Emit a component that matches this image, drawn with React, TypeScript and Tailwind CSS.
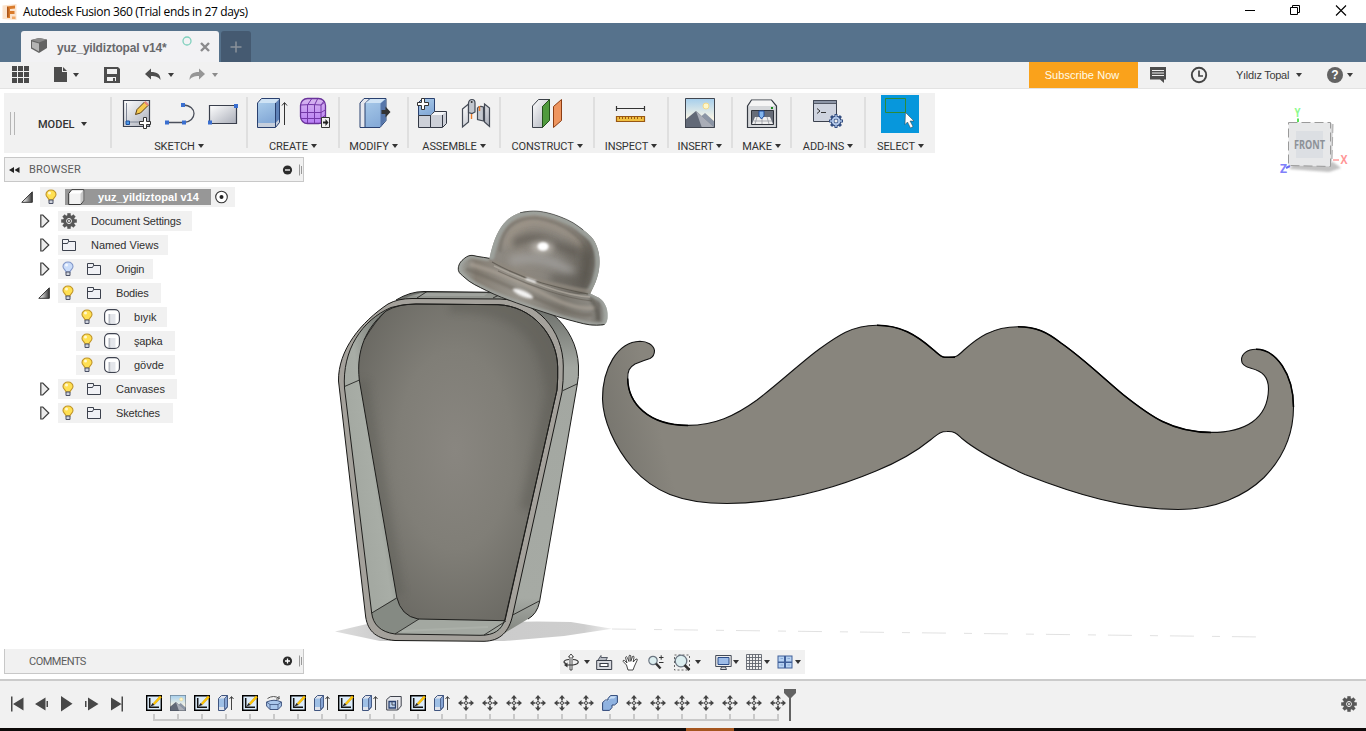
import React from "react";

type Pt = [number, number];

/** Smooth closed or open path through points, tangents weighted by segment length. */
function smooth(pts: Pt[], closed = false): string {
  const n = pts.length;
  const at = (i: number): Pt =>
    closed ? pts[(i + n) % n] : pts[Math.max(0, Math.min(n - 1, i))];
  const tangent = (i: number): Pt => {
    const [a, b, c] = [at(i - 1), at(i), at(i + 1)];
    const d1 = Math.hypot(b[0] - a[0], b[1] - a[1]) || 1e6;
    const d2 = Math.hypot(c[0] - b[0], c[1] - b[1]) || 1e6;
    const tx = ((b[0] - a[0]) / d1) * d2 + ((c[0] - b[0]) / d2) * d1;
    const ty = ((b[1] - a[1]) / d1) * d2 + ((c[1] - b[1]) / d2) * d1;
    const l = Math.hypot(tx, ty) || 1;
    return [tx / l, ty / l];
  };
  let d = `M${pts[0][0]} ${pts[0][1]}`;
  const last = closed ? n : n - 1;
  for (let i = 0; i < last; i++) {
    const [p, q, s, t] = [at(i), at(i + 1), tangent(i), tangent(i + 1)];
    const k = Math.hypot(q[0] - p[0], q[1] - p[1]) / 2.9;
    d += `C${p[0] + s[0] * k} ${p[1] + s[1] * k} ${q[0] - t[0] * k} ${q[1] - t[1] * k} ${q[0]} ${q[1]}`;
  }
  return closed ? d + "Z" : d;
}

interface ArtProps {
  box: string;
  className: string;
  children: React.ReactNode;
}
const Art = ({ box, className, children }: ArtProps) => (
  <svg viewBox={box} className={`shrink-0 ${className}`} fill="none">
    {children}
  </svg>
);

const Caret = ({ className = "" }: { className?: string }) => (
  <svg viewBox="0 0 6 4" className={`h-1 w-1.5 shrink-0 ${className}`}>
    <path d="M0 0h6L3 4z" fill="currentColor" />
  </svg>
);

/* ---------- title, tabs and quick access ---------- */

const TitleBar = () => (
  <div className="flex h-[23px] items-center bg-white">
    <Art box="2 2 16 18" className="ml-0.5 h-[18px] w-4">
      <path d="M2.500 4.500l14-1.500v16l-14-1z" fill="#fbe3cd" />
      <path d="M7 5.500l8-1v3l-5 .5v2h4.500v3H10v4H7z" fill="#d97b2c" />
      <path d="M7 5.500l1.500 1v9.500H7z" fill="#a9541a" />
      <path d="M12 15.500h3.500V18H12z" fill="#f0a968" />
    </Art>
    <div className="ml-[5px] w-[240px] whitespace-nowrap font-['Open_Sans',sans-serif] text-[12px] leading-4 tracking-[-0.36px] text-black">
      Autodesk Fusion 360 (Trial ends in 27 days)
    </div>
    <Art box="1240 0 110 23" className="mr-4 ml-auto h-[23px] w-[110px]">
      <path d="M1245 10.500h10M1290.500 7.500h7v7h-7zM1292.500 7.500v-2h7v7h-2" stroke="#000" />
      <path d="M1336 5.500l10 10M1346 5.500l-10 10" stroke="#000" strokeWidth="1.100" />
    </Art>
  </div>
);

const TabStrip = () => (
  <div className="flex h-[39px] items-end bg-[#56728c] pl-[21px]">
    <div className="flex h-[31px] w-[198px] items-center rounded-t-[3px] bg-[#f2f2f4]">
      <Art box="30 37.500 18 18" className="ml-[9px] h-[18px] w-[18px]">
        <path d="M31 39.500l8-2 8 1.500v8.500l-8 5-8-4.500z" fill="#636363" />
        <path d="M32 41l7 2v8l-7-4z" fill="#b4b4b4" />
        <path d="M31.500 39.500l7.500-2 7.500 1.500-7.500 3z" fill="#8a8a8a" />
      </Art>
      <div className="mt-[3px] ml-[9px] w-[121px] whitespace-nowrap text-[12px] leading-4 font-bold tracking-[-0.2px] text-[#68696c]">
        yuz_yildiztopal v14*
      </div>
      <Art box="178 33 36 22" className="h-[22px] w-9">
        <circle cx="187" cy="38" r="4" stroke="#7fd0bd" strokeWidth="1.300" />
        <path d="M201 40l8 8M209 40l-8 8" stroke="#8a8a8c" strokeWidth="2.400" />
      </Art>
    </div>
    <div className="ml-0.5 flex h-[31px] w-[30px] items-center justify-center rounded-t-[3px] bg-[#455a71]">
      <Art box="0 0 12 12" className="h-3 w-3">
        <path d="M6 .5v11M.5 6h11" stroke="#8b929b" strokeWidth="1.500" />
      </Art>
    </div>
  </div>
);

const QuickBar = () => (
  <div className="flex h-[27px] items-center border-b border-[#e3e3e3] bg-[#f1f1f1] text-[#3c3c3c]">
    <Art box="12 66 18 18" className="ml-3 h-[18px] w-[18px]">
      <path
        d="M12 66h5v5h-5zM18 66h5v5h-5zM24 66h5v5h-5zM12 72h5v5h-5zM18 72h5v5h-5zM24 72h5v5h-5zM12 78h5v5h-5zM18 78h5v5h-5zM24 78h5v5h-5z"
        fill="#4a4a4a"
      />
    </Art>
    <Art box="54 67 14 18" className="ml-6 h-[18px] w-3.5">
      <path d="M54 68h8v5h5v10H54z" fill="#4d4d4d" />
      <path d="M63 68l4 4h-4z" fill="#4d4d4d" />
    </Art>
    <Caret className="ml-[5px]" />
    <Art box="104 66.500 16 18" className="ml-[25px] h-[18px] w-4">
      <path fillRule="evenodd" d="M104 67.500h14l2 2v14h-16zM107 69.500v5h10v-5zM107 77.500v4h9v-4z" fill="#4d4d4d" />
      <path d="M113 78.500h2v3h-2z" fill="#4d4d4d" />
    </Art>
    <Art box="145 66 17 18" className="ml-[25px] h-[18px] w-[17px]">
      <path d="M145 74l6-5.500V72c6 0 9.500 2 9.500 8-2-3-4.500-4-9.500-4v3.500z" fill="#4d4d4d" />
    </Art>
    <Caret className="ml-1.5" />
    <Art box="189 66 17 18" className="ml-[15px] h-[18px] w-[17px]">
      <path d="M205 74l-6-5.500V72c-6 0-9.500 2-9.500 8 2-3 4.500-4 9.500-4v3.500z" fill="#969696" />
    </Art>
    <Caret className="ml-1.5 text-[#8b8b8b]" />
    <div className="ml-auto flex h-[26px] w-[109px] items-center justify-center bg-[#faa21b] pr-[3px] text-[11px] tracking-[0.05px] whitespace-nowrap text-[#fffbe8]">
      Subscribe Now
    </div>
    <Art box="1150 66 16 18" className="ml-3 h-[18px] w-4">
      <path d="M1150 67h16v12.500h-2V83l-4-3.500H1150z" fill="#4d4d4d" />
      <path d="M1152 70.500h12M1152 73h12M1152 75.500h12" stroke="#eee" />
    </Art>
    <Art box="1190 66 18 18" className="ml-6 h-[18px] w-[18px]">
      <circle cx="1199" cy="75" r="7.200" stroke="#444" strokeWidth="1.900" />
      <path d="M1199 70.500V76h4" stroke="#444" strokeWidth="1.700" />
    </Art>
    <div className="ml-7 w-[54px] text-[11px] tracking-[-0.3px] whitespace-nowrap text-[#3c3c3c]">Yıldız Topal</div>
    <Caret className="ml-1.5" />
    <div className="ml-[25px] flex h-4 w-4 items-center justify-center rounded-full bg-[#636363] text-[12px] leading-none font-bold text-white">
      ?
    </div>
    <Caret className="mr-[13px] ml-1" />
  </div>
);

/* ---------- ribbon ---------- */

const Defs = () => (
  <svg className="absolute h-0 w-0">
    <defs>
      <linearGradient id="silver" x2="1" y2="1">
        <stop stopColor="#fff" />
        <stop offset="1" stopColor="#a9adb8" />
      </linearGradient>
      <linearGradient id="blue" x2=".4" y2="1">
        <stop stopColor="#a9cbea" />
        <stop offset="1" stopColor="#86abd8" />
      </linearGradient>
      <linearGradient id="violet" x2="0" y2="1">
        <stop stopColor="#d7b7ef" />
        <stop offset="1" stopColor="#b87cf5" />
      </linearGradient>
      <linearGradient id="sky" x2="0" y2="1">
        <stop stopColor="#a3cdec" />
        <stop offset=".7" stopColor="#fbf6e6" />
      </linearGradient>
      <linearGradient id="tri" x2="1">
        <stop offset=".2" stopColor="#eee" />
        <stop offset="1" stopColor="#333" />
      </linearGradient>
    </defs>
  </svg>
);

const SketchArt = () => (
  <Art box="118 95 36 38" className="h-[38px] w-9">
    <path d="M123.500 100.500h26v26h-26z" fill="url(#silver)" stroke="#3a3f4c" strokeWidth="1.200" />
    <path d="M126.500 103v19h21" stroke="#7d8494" />
    <path d="M126 121h3.500v3.500H126z" fill="#4f9be8" stroke="#1d4f9c" />
    <path d="M135.500 114.500l1.500-5 7.500-7.500 3.500 3.500-7.500 7.500z" fill="#f5c94e" stroke="#5d4012" />
    <path d="M144 102.500l1.500-1.500 3.500 3.500-1.500 1.500z" fill="#e7867a" />
    <path d="M143.500 117.500h3v4h4v3h-4v4h-3v-4h-4v-3h4z" fill="#fff" stroke="#333" />
  </Art>
);
const ArcArt = () => (
  <Art box="161 95 36 38" className="h-[38px] w-9">
    <path d="M167 122.500h17c13-1 14-17-1-17.500" stroke="#4b505c" strokeWidth="1.300" />
    <path d="M165 120.500h4v4h-4zM182 120.500h4v4h-4zM181 103h4v4h-4z" fill="#3a6fd0" />
  </Art>
);
const RectArt = () => (
  <Art box="204 95 36 38" className="h-[38px] w-9">
    <path d="M209.500 105.500h27v18h-27z" fill="url(#silver)" stroke="#3a3f4c" strokeWidth="1.200" />
    <path d="M208 120.500h4v4h-4zM234 104h4v4h-4z" fill="#3a6fd0" />
  </Art>
);
const ExtrudeArt = () => (
  <Art box="253 95 36 38" className="h-[38px] w-9">
    <path d="M257.500 103l4-4.500h18v24l-4 5h-18z" fill="#c7cfdc" />
    <path d="M258 103h17v20h-17z" fill="url(#blue)" />
    <path d="M258 103l4-4h17l-4 4z" fill="#cfe3f5" />
    <path d="M275.500 103l4-4v20l-4 4z" fill="#5f82b8" />
    <path d="M257.500 103l4-4.500h18v24l-4 5h-18zM275.500 103v24" stroke="#29406f" />
    <path d="M284.500 125v-22M282 105.500l2.500-3 2.500 3" stroke="#333" />
  </Art>
);
const FormArt = () => (
  <Art box="297 95 36 38" className="h-[38px] w-9">
    <rect x="300.500" y="98.500" width="25" height="25" rx="7" fill="url(#violet)" stroke="#69329b" strokeWidth="1.300" />
    <path d="M301 105q10-1 20 0l4-3M301 112.500h20l5-3M301 118.500h20l4-3M307.500 123v-18l4-6M314.500 123v-18l3-6M321 123v-18l3-4" stroke="#7438a8" />
    <path d="M321.500 117.500h8v10h-8z" fill="#f1f1f1" stroke="#333" />
    <path d="M323 121.500h2.500V119l3 3.500-3 3.500v-2.500H323z" fill="#222" />
  </Art>
);
const PressPullArt = () => (
  <Art box="354.500 95 37 38" className="h-[38px] w-[37px]">
    <path d="M359.500 103l4-4.500h7l-5 5v24h-6z" fill="#e6e8ee" stroke="#29406f" />
    <path d="M364.500 103.500l5-5h16v22l-6 7h-15z" fill="url(#blue)" stroke="#29406f" />
    <path d="M365 103l5-4h15l-5 4z" fill="#cfe3f5" />
    <path d="M380 103.500l5-4.500v21l-5 7z" fill="#5676aa" />
    <path d="M381 110h4v-3.500l5 5.500-5 5.500V114h-4z" fill="#333" />
  </Art>
);
const ComponentArt = () => (
  <Art box="414 95 36 38" className="h-[38px] w-9">
    <path d="M418.500 102.500l4-4h12v13l-4 4h-12z" fill="url(#blue)" stroke="#29406f" />
    <path d="M418.500 115.500h12v12h-12zM430.500 115.500l4-4h12v12l-4 4h-12z" fill="#cdd0d8" stroke="#333844" />
    <path d="M431 115l4-3h11l-4 3z" fill="#f5f6f8" />
    <path d="M442.500 115v12" stroke="#333844" />
    <path d="M421.500 98.500h3v4h4v3h-4v4h-3v-4h-4v-3h4z" fill="#fff" stroke="#333" />
  </Art>
);
const JointArt = () => (
  <Art box="458 95 36 38" className="h-[38px] w-9">
    <path d="M462.500 109l6-5v18l-6 5zM484.500 104l5 4v18.500l-5-4.500z" fill="url(#silver)" stroke="#444a55" strokeWidth="1.200" />
    <path d="M468.500 103q.5-3.500 3.500-3.500t3 3.500v9l-3 1.500-3.500-1zM477.500 108q2-2.500 6-1v14l-6-1.500z" fill="#c3c7ce" stroke="#444a55" strokeWidth="1.200" />
    <path d="M471.500 114v5M479.500 106v5" stroke="#ec7b28" strokeWidth="1.400" />
    <circle cx="471.700" cy="102" r="1" fill="#333" />
  </Art>
);
const PlaneArt = () => (
  <Art box="528 95 38 38" className="h-[38px] w-[38px]">
    <path d="M532.500 106l6-6.500h11l-7 7v21h-10z" fill="url(#silver)" stroke="#3b4049" />
    <path d="M542.500 106.500l7-7v21l-7 7z" fill="#4f9a3d" stroke="#23511b" />
    <path d="M553.500 106.500l8-7v21l-8 7z" fill="#ee955f" stroke="#8c3d13" />
  </Art>
);
const InspectArt = () => (
  <Art box="612 95 38 38" className="h-[38px] w-[38px]">
    <path d="M616.500 106v5M644.500 106v5M617 108.500h27" stroke="#333" strokeWidth="1.200" />
    <path d="M616.500 116.500h28v5h-28z" fill="#f0c040" stroke="#995713" strokeWidth="1.200" />
    <path d="M619.500 116v3M622.500 116v3M625.500 116v3M628.500 116v3M631.500 116v3M634.500 116v3M637.500 116v3M641.500 116v3" stroke="#995713" />
  </Art>
);
const Picture = () => (
  <>
    <path d="M0 0h30v30H0z" fill="url(#sky)" />
    <circle cx="21" cy="8" r="3" fill="#fff7c8" stroke="#f3d98a" />
    <path d="M12 22l8-7 10 9v6H12z" fill="#8b95a5" />
    <path d="M0 22l11-9 19 17H0z" fill="#626977" />
    <path d="M11 13l19 17H17z" fill="#a9adb7" />
    <path d="M.5.500h29v29H.5z" stroke="#40454f" />
  </>
);
const InsertArt = () => (
  <Art box="-4 -3 38 38" className="h-[38px] w-[38px]">
    <Picture />
  </Art>
);
const MakeArt = () => (
  <Art box="743 95 37 38" className="h-[38px] w-[37px]">
    <path d="M747.500 106l4-6h20l5 6v21.500h-29z" fill="#d5d7da" stroke="#353a43" strokeWidth="1.200" />
    <path d="M749 106l3-5.500h19l4 5.500z" fill="#f5f5f5" />
    <path d="M771 107h2v2h-2z" fill="#17851e" />
    <path d="M751.500 110.500h22v14h-22z" fill="#666c78" stroke="#30343c" />
    <path d="M755 117h15l3 7h-21z" fill="#eee" />
    <path d="M754 121h18M757 117l-2 7M762 117v7M767 117l2 7" stroke="#8e9199" strokeWidth=".7" />
    <path d="M759 111h5v5l-2.500 3-2.500-3z" fill="#83b6ee" stroke="#204d9c" />
  </Art>
);
const Cog = ({ x, y, r, fill, stroke }: { x: number; y: number; r: number; fill: string; stroke: string }) => (
  <g transform={`translate(${x} ${y})`}>
    {[0, 45, 90, 135].map((a) => (
      <path key={a} transform={`rotate(${a})`} d={`M0 ${-r}V${r}`} stroke={stroke} strokeWidth={r * 0.42} />
    ))}
    <circle r={r * 0.7} fill={fill} stroke={stroke} strokeWidth="1.200" />
    <circle r={r * 0.3} fill="#f1f1f1" stroke={stroke} />
  </g>
);
/** Solid settings gear: toothed ring around a ringed hub. */
const Gear = () => (
  <>
    {[0, 45, 90, 135].map((a) => (
      <path key={a} transform={`rotate(${a})`} d="M0 -7.800V7.800" stroke="#575757" strokeWidth="3.400" />
    ))}
    <circle r="4.400" fill="#f1f1f1" stroke="#575757" strokeWidth="3" />
    <circle r="1.500" fill="#f1f1f1" stroke="#575757" strokeWidth="1.200" />
  </>
);
const AddInsArt = () => (
  <Art box="809 95 38 38" className="h-[38px] w-[38px]">
    <path d="M813.500 100.500h23v21h-23z" fill="#cfd4df" stroke="#3b414e" />
    <path d="M813.500 100.500h23v3h-23z" fill="#8c95a6" stroke="#3b414e" strokeWidth=".8" />
    <path d="M817 108.500l3 2.500-3 2.500M821 112.500h5" stroke="#333" />
    <Cog x={836} y={121} r={7} fill="#b9cdec" stroke="#344e80" />
    <path d="M836 115v4M836 123v4M830 121h4M838 121h4" stroke="#a9c1e6" strokeWidth="1.400" />
  </Art>
);
const SelectArt = () => (
  <Art box="881 95 39 38" className="h-[38px] w-[39px]">
    <path d="M881 95h38v38h-38z" fill="#0797dc" />
    <path d="M885.500 98.500h20v14h-20z" stroke="#2f8a35" />
    <path d="M905.500 112.500l8.500 8.500h-4l3 5.500-2.500 1.500-3-6-2.500 2.500z" fill="#fff" stroke="#3337" />
  </Art>
);

const Sep = () => <div className="mt-1 h-[51px] w-0.5 shrink-0 bg-[#dfdfdf]" />;

const Group = ({ label, width, gap = "", children }: { label: string; width: string; gap?: string; children: React.ReactNode }) => (
  <div className={`flex shrink-0 flex-col items-center ${width}`}>
    <div className={`mt-0.5 flex ${gap}`}>{children}</div>
    <div className="mt-[7px] flex items-start gap-[3px] font-['Roboto',sans-serif] text-[11px] leading-[14px] tracking-[-0.1px] whitespace-nowrap text-[#333]">
      {label}
      <Caret className="mt-1" />
    </div>
  </div>
);

const Ribbon = () => (
  <div className="mt-1 ml-1 flex h-[60px] w-[931px] bg-[#f1f1f1]">
    <div className="flex w-[106px] shrink-0 items-center">
      <div className="ml-1.5 h-[23px] w-[5px] border-x border-[#b5b5b5]" />
      <div className="mt-[3px] ml-[23px] flex items-start gap-1.5 font-['Roboto',sans-serif] text-[11px] leading-[14px] font-medium text-[#333]">
        MODEL
        <Caret className="mt-1" />
      </div>
    </div>
    <Sep />
    <Group label="SKETCH" width="w-[134px]" gap="gap-[7px]"><SketchArt /><ArcArt /><RectArt /></Group>
    <Sep />
    <Group label="CREATE" width="w-[90px]" gap="gap-2"><ExtrudeArt /><FormArt /></Group>
    <Sep />
    <Group label="MODIFY" width="w-[67px]"><PressPullArt /></Group>
    <Sep />
    <Group label="ASSEMBLE" width="w-[90px]" gap="gap-2"><ComponentArt /><JointArt /></Group>
    <Sep />
    <Group label="CONSTRUCT" width="w-[92px]"><PlaneArt /></Group>
    <Sep />
    <Group label="INSPECT" width="w-[72px]"><InspectArt /></Group>
    <Sep />
    <Group label="INSERT" width="w-[62px]"><InsertArt /></Group>
    <Sep />
    <Group label="MAKE" width="w-[57px]"><MakeArt /></Group>
    <Sep />
    <Group label="ADD-INS" width="w-[72px]"><AddInsArt /></Group>
    <Sep />
    <Group label="SELECT" width="w-[69px]"><SelectArt /></Group>
  </div>
);

/* ---------- browser tree ---------- */

const Bulb = ({ off = false }: { off?: boolean }) => (
  <Art box="0 0 12 16" className="h-4 w-3">
    <path
      d="M6 1C3 1 1 3 1 5.500c0 2.500 2.500 3 3 5.500h4c.500-2.500 3-3 3-5.500C11 3 9 1 6 1z"
      fill={off ? "#c9dcfa" : "#ffe052"}
      stroke={off ? "#8196c8" : "#c09428"}
      strokeWidth="1.100"
    />
    <circle cx="4.500" cy="4" r="1.500" fill="#fff" opacity=".75" />
    <path d="M4 11h4v3.500H4z" fill="#cfd3dc" stroke="#4b5166" />
  </Art>
);
const Folder = () => (
  <Art box="0 0 16 14" className="h-3.5 w-4">
    <path d="M1.500 1.500h6v2h7v9h-13z" fill="#f0f1f5" stroke="#3c414d" />
    <path d="M2 5.500h4.500l1-2" stroke="#3c414d" />
  </Art>
);
const Body = () => (
  <Art box="0 0 16 16" className="h-4 w-4">
    <rect x=".6" y=".6" width="14.800" height="14.800" rx="4.500" fill="#fff" stroke="#3f4350" strokeWidth="1.100" />
    <path d="M4.500 5v10h2V5z" fill="#b8bcc4" />
    <path d="M7 5h4.500v9.500H7z" fill="#e4e6eb" />
  </Art>
);
const Closed = () => (
  <Art box="0 0 10 14" className="ml-0.5 h-3.5 w-2.5">
    <path d="M.8 1v12h2l6-6-6-6z" fill="#ececec" stroke="#3c3c3c" strokeWidth="1.200" />
  </Art>
);
const Open = () => (
  <Art box="0 0 12 12" className="h-3 w-3">
    <path d="M.8 11.300L11.300.8v10.500z" fill="url(#tri)" stroke="#333" />
  </Art>
);

interface NodeProps {
  indent: string;
  width: string;
  arrow?: React.ReactNode;
  icons: React.ReactNode;
  text: string;
  tight?: boolean;
}
const Row = ({ indent, width, arrow, icons, text, tight }: NodeProps) => (
  <div className={`flex h-6 items-center ${indent}`}>
    {arrow && <div className="flex w-5 justify-start">{arrow}</div>}
    <div className={`flex h-5 items-center bg-[#f1f1f1] ${width}`}>
      {icons}
      <span className={`ml-3.5 text-[11px] whitespace-nowrap text-[#303030] ${tight ? "tracking-[-0.17px]" : ""}`}>{text}</span>
    </div>
  </div>
);

const LampFolder = ({ off }: { off?: boolean }) => (
  <div className="ml-1 flex items-center gap-3">
    <Bulb off={off} />
    <Folder />
  </div>
);
const LampBody = () => (
  <div className="ml-[5px] flex items-center gap-[11px]">
    <Bulb />
    <Body />
  </div>
);

const Tree = () => (
  <div className="mt-[3px] flex flex-col">
    <div className="flex h-6 items-center pl-5">
      <div className="w-5 pl-px"><Open /></div>
      <div className="flex h-5 w-[195px] items-center bg-[#f1f1f1]">
        <div className="ml-[5px]"><Bulb /></div>
        <div className="ml-2 flex h-4 w-[146px] items-center bg-[#979797]">
          <Art box="0 0 18 16" className="ml-[3px] h-4 w-[18px]">
            <path d="M.7 4.500l3-3.800h12v10.800l-3 4H.7z" fill="#f2f2f2" stroke="#333" />
            <path d="M1.500 4.500l3-3H15l-3 3z" fill="#fff" />
            <path d="M12.500 5l3-4v10l-3 4z" fill="#c7c7c7" />
          </Art>
          <span className="ml-3 text-[11px] font-bold tracking-[0.07px] whitespace-nowrap text-white">yuz_yildiztopal v14</span>
        </div>
        <Art box="0 0 14 14" className="ml-1 h-3.5 w-3.5">
          <circle cx="6.500" cy="7" r="5.800" stroke="#333" strokeWidth="1.100" fill="#fff" />
          <circle cx="6.500" cy="7" r="2" fill="#222" />
        </Art>
      </div>
    </div>
    <Row indent="pl-[38px]" width="w-[134px]" arrow={<Closed />} tight text="Document Settings" icons={
      <Art box="-8 -8 16 16" className="ml-[3px] h-4 w-4"><Gear /></Art>
    } />
    <Row indent="pl-[38px]" width="w-[110px]" arrow={<Closed />} text="Named Views" icons={<div className="ml-[3px]"><Folder /></div>} />
    <Row indent="pl-[38px]" width="w-[95px]" arrow={<Closed />} tight text="Origin" icons={<LampFolder off />} />
    <Row indent="pl-[38px]" width="w-[103px]" arrow={<Open />} tight text="Bodies" icons={<LampFolder />} />
    <Row indent="pl-[76px]" width="w-[91px]" tight text="bıyık" icons={<LampBody />} />
    <Row indent="pl-[76px]" width="w-[99px]" tight text="şapka" icons={<LampBody />} />
    <Row indent="pl-[76px]" width="w-[99px]" text="gövde" icons={<LampBody />} />
    <Row indent="pl-[38px]" width="w-[119px]" arrow={<Closed />} text="Canvases" icons={<LampFolder />} />
    <Row indent="pl-[38px]" width="w-[115px]" arrow={<Closed />} tight text="Sketches" icons={<LampFolder />} />
  </div>
);

const PanelEnd = ({ plus }: { plus?: boolean }) => (
  <Art box="282 0 20 12" className="ml-auto h-3 w-5">
    <circle cx="287.500" cy="6" r="4.600" fill="#2b2b2b" />
    <path d={plus ? "M285 6h5M287.500 3.500v5" : "M285 6h5"} stroke="#fff" strokeWidth="1.300" />
    <path d="M299.500.500v11M301.500 2v8" stroke="#999" />
  </Art>
);

const Browser = () => (
  <div className="mt-1 ml-1 flex h-[25px] w-[300px] items-center border border-[#c8c8c8] bg-[#f1f1f1] pr-px">
    <Art box="9 0 11 8" className="ml-1 h-2 w-[11px]">
      <path d="M14 1v6L9 4zM19.500 1v6l-5-3z" fill="#222" />
    </Art>
    <div className="ml-[9px] font-['Roboto',sans-serif] text-[11px] leading-[14px] tracking-[0.2px] text-[#5c5c5c]">BROWSER</div>
    <PanelEnd />
  </div>
);

/* ---------- model ---------- */

const MOUSTACHE_TOP_LEFT =
  "M945 357.300C941 357.500 938 353.500 933 349.500C916 334.500 900 325.200 877 325.200C851 325.200 836 337 816 351.500C796 367 778 384 757 400C735 416 714 425.400 688 425.400C648 425.400 628 403 627.700 378.500C627.700 371 629 367.500 635 364C641 361.500 645 360 650 358.500C653 357 654.500 354 654.500 350.500C653.500 345 647 341.300 640 341.300";
const MOUSTACHE_BOTTOM_LEFT =
  "C617 342 602.500 369 602.500 399C603 420 614 446 633 468.500C653 491 680 503.500 727 503.500C780 503 833 489 876 471C898 462 917 451 931 439.500C938 434 940 431.500 947 431.500";
const MOUSTACHE_BOTTOM_RIGHT =
  "C955 431 957 434 962 438.500C978 452 1000 463 1025 474.500C1075 494 1125 509.500 1178 509.500C1215 509.500 1245 496 1264 477.500C1284 457 1293.500 432 1293.500 407C1293.500 374 1276 349.300 1256 349.300";
const MOUSTACHE_TOP_RIGHT =
  "C1247 349.300 1241.500 354 1241.500 360C1241.500 365 1246 367 1251 368.300C1263 371.500 1268.500 377 1268.500 389C1268 419 1245 432.400 1211 432.400C1172 432.400 1150 416 1123 394.500C1101 376 1082 357.500 1061 343C1047 332 1036 326.700 1018 326.700C992 326.700 977 338.500 964 350C956 358 955 357.500 945 357.300z";

const DOME: Pt[] = [
  [489.3, 259], [492, 248], [496.7, 235], [506.7, 220.5], [520, 212.7], [533.3, 211], [547, 212.7], [560, 216.7], [573, 222.7], [583.3, 230],
  [593, 239], [598, 250], [599.3, 266.7], [596, 281], [590, 294],
];
const BRIM: Pt[] = [
  [489.3, 258.3], [478, 256.5], [470, 255.5], [463.3, 259.3], [459, 265], [458.5, 270.7], [464, 277], [486.7, 290.7], [516.7, 303], [543.3, 312],
  [570, 320.2], [596.7, 325.2], [604.5, 324.5], [607.5, 313.3], [603.3, 301.7], [590, 293.3],
];
const dome = smooth(DOME);
const brim = smooth(BRIM);
const domeShape = dome + "C570 296 550 288 529 279Q505 270 489.300 259";

const RIM_OUT =
  "M338.500 381C338 350 361 322 388 304Q398 298.500 412 298.500L500 299C537 300 563 330 563.300 366Q563.500 382 562 392L512.700 615C509 632 500 641 484 641.300L395 640.500C377 639 368 632 365.700 617z";
const RIM_IN =
  "M344.500 388C342 350 362 320 391 307.500Q402 304 416 304L498 304.700C532 306 557 335 557.700 367Q558 378 557 390L505 619C502 630 494 635.500 480 635.300L395 634C380 632 373 624 371.700 613z";
const BACK_FACE =
  "M386 311Q398 304 416 304L498 304.700C532 306 557 335 557.700 367Q558 378 557 390L505 620.700L418 619Q401 616 396.700 597L359.300 380C356 350 366 328 386 311z";

const Scene = () => (
  <svg viewBox="0 89 1366 590" className="absolute inset-0 h-[590px] w-[1366px]" fill="none">
    <defs>
      <radialGradient id="face" gradientUnits="userSpaceOnUse" cx="455" cy="450" r="170" gradientTransform="translate(455 450) scale(.75 1.300) translate(-455 -450)">
        <stop stopColor="#898680" />
        <stop offset=".45" stopColor="#807e77" />
        <stop offset="1" stopColor="#64635d" />
      </radialGradient>
      <linearGradient id="side" gradientUnits="userSpaceOnUse" x1="345" y1="400" x2="385" y2="394">
        <stop stopColor="#a4a9a2" />
        <stop offset=".4" stopColor="#a8ada6" />
        <stop offset="1" stopColor="#7f837d" />
      </linearGradient>
      <linearGradient id="outer" gradientUnits="userSpaceOnUse" x1="0" y1="310" x2="0" y2="630">
        <stop stopColor="#6f726d" />
        <stop offset=".18" stopColor="#a3a7a1" />
        <stop offset=".9" stopColor="#a6aaa4" />
        <stop offset="1" stopColor="#868983" />
      </linearGradient>
      <linearGradient id="cap" gradientUnits="userSpaceOnUse" x1="492" y1="245" x2="600" y2="270">
        <stop stopColor="#8a8781" />
        <stop offset=".25" stopColor="#908a81" />
        <stop offset=".6" stopColor="#87837c" />
        <stop offset=".88" stopColor="#68645d" />
        <stop offset="1" stopColor="#7b7973" />
      </linearGradient>
      <linearGradient id="edge" gradientUnits="userSpaceOnUse" x1="458" y1="0" x2="608" y2="0">
        <stop stopColor="#a0a39e" />
        <stop offset=".12" stopColor="#857e74" />
        <stop offset=".4" stopColor="#98948c" />
        <stop offset=".7" stopColor="#7d7971" />
        <stop offset=".88" stopColor="#8b8881" />
        <stop offset=".94" stopColor="#76736d" />
        <stop offset="1" stopColor="#aab0ab" />
      </linearGradient>
      <linearGradient id="tash" gradientUnits="userSpaceOnUse" x1="602" y1="400" x2="650" y2="388">
        <stop stopColor="#797770" />
        <stop offset="1" stopColor="#88857d" />
      </linearGradient>
      <linearGradient id="floor" x2="1">
        <stop stopColor="#dedede" />
        <stop offset=".2" stopColor="#c8c8c8" />
        <stop offset=".9" stopColor="#cecece" />
        <stop offset="1" stopColor="#eee" />
      </linearGradient>
      <filter id="b1" filterUnits="userSpaceOnUse" x="300" y="89" width="1066" height="590"><feGaussianBlur stdDeviation="1.300" /></filter>
      <filter id="b3" filterUnits="userSpaceOnUse" x="300" y="180" width="340" height="480"><feGaussianBlur stdDeviation="3.500" /></filter>
      <clipPath id="domeClip"><path d={domeShape} /></clipPath>
      <clipPath id="brimClip"><path d={brim + "Z"} /></clipPath>
      <clipPath id="faceClip"><path d={BACK_FACE} /></clipPath>
    </defs>

    <path d="M335 631.500L367 624l170-2.500 34 .5 41 6.700-48 7.300-60 5H380z" fill="url(#floor)" />
    <path d="M612 629l650 8" stroke="#d4d4d4" strokeWidth=".7" strokeDasharray="24 18 8 12" />

    <path d="M396 300Q410 291.500 424 291.500L494 292.300C540 294 577 325 578.500 366Q579 377 577 386L539.500 602Q537 614 528 619L503 634L470 600L500 400L520 310z" fill="url(#outer)" />
    <path d="M396 300Q410 291.500 424 291.500L494 292.300C540 294 577 325 578.500 366Q579 377 577 386L539.500 602Q537 614 528 619" stroke="#1d1d1b" />
    <path d="M404 299q10-6 24-6l68 .5 18 6z" fill="#92958f" />
    <path d="M420 293h68l-4 3h-70z" fill="#a8aca6" opacity=".6" />
    <path d={RIM_OUT} fill="#a4a19b" stroke="#191917" />
    <path d={RIM_IN} fill="url(#side)" />
    <path d="M396.700 597L371.700 613C373 624 380 632 395 634L419 619Q401 616 396.700 597z" fill="#858a83" />
    <path d="M419 619l87 1.500c-3 10-10 15-26 14.800L395 634z" fill="#a3a8a1" />
    <path d="M402 631l86-4" stroke="#abb0a9" strokeWidth="2" />
    <path d={BACK_FACE} fill="url(#face)" />
    <g clipPath="url(#faceClip)">
      <path d="M450 303C525 301 552 335 556 395L530 510" stroke="#5e5d57" strokeWidth="20" opacity=".45" filter="url(#b3)" />
      <path d="M362 380l36 215" stroke="#5f5f58" strokeWidth="13" opacity=".4" filter="url(#b3)" />
    </g>
    <path d={BACK_FACE} stroke="#1e1e1c" />
    <path d={RIM_IN} stroke="#1e1e1c" />
    <path d="M344.500 386.500l15-6.500M562.700 390.700l15-7M371.700 613l25-15M395 634l24-15M512.700 615l26.500-14M417 298l10-6.500M484 635l22-14M493 298l10-5M364 340q12-20 22-29" stroke="#262624" strokeWidth=".9" />

    <path d={brim + "Z"} fill="url(#edge)" />
    <g clipPath="url(#brimClip)">
      <path d={brim} stroke="#a2a6a1" strokeWidth="6" filter="url(#b1)" opacity=".85" />
      <path d="M466 269q32 12 74 31t52 14" stroke="#6b655c" strokeWidth="4" filter="url(#b1)" opacity=".45" />
      <path d="M470 264q36 10 72 29t54 14" stroke="#aba398" strokeWidth="4" filter="url(#b1)" opacity=".6" />
      <path d="M590 298q8 8 8 22" stroke="#55524c" strokeWidth="4" filter="url(#b1)" opacity=".5" />
      <ellipse cx="523" cy="293.500" rx="11" ry="3" transform="rotate(23 523 293.500)" fill="#fff" filter="url(#b1)" opacity=".9" />
    </g>
    <path d={domeShape} fill="url(#cap)" />
    <g clipPath="url(#domeClip)">
      <path d={dome} stroke="#9da19c" strokeWidth="9" filter="url(#b1)" />
      <path d="M506 246q5-24 29-25 32 5 51 30" stroke="#a3998c" strokeWidth="7" filter="url(#b3)" opacity=".8" />
      <path d="M500 252q2-34 36-34 38 6 53 34" stroke="#6f6a62" strokeWidth="2.500" filter="url(#b1)" opacity=".5" />
      <path d="M514 244q16-10 30-4t34 14" stroke="#5f5a52" strokeWidth="8" filter="url(#b3)" opacity=".8" />
      <path d="M510 261q25-6 43 2t18 10" stroke="#a09f9c" strokeWidth="9" filter="url(#b3)" opacity=".85" />
      <path d="M583 244q8 20 0 40" stroke="#58544d" strokeWidth="9" filter="url(#b3)" opacity=".75" />
      <path d="M550 278q24 2 38 8" stroke="#5f5b55" strokeWidth="9" filter="url(#b3)" opacity=".6" />
      <path d="M493 261q30 16 55 22t44 9" stroke="#8f887e" strokeWidth="4" filter="url(#b1)" opacity=".8" />
      <ellipse cx="543" cy="247" rx="11" ry="5" fill="#d9d5cf" filter="url(#b3)" opacity=".8" />
      <ellipse cx="543" cy="246.500" rx="5.500" ry="4.200" fill="#fff" filter="url(#b1)" />
    </g>
    <path d="M492 262q25 14 50 21t46 11" stroke="#4c4740" strokeWidth="1.200" opacity=".6" />
    <path d="M494 266q26 12 52 21t44 10" stroke="#b9b3a8" strokeWidth="1.500" opacity=".6" />
    <path d="M498 271q26 12 50 20t44 10" stroke="#5c564e" strokeWidth="1.200" opacity=".5" />
    <path d="M526 278.500l10 3.500" stroke="#fff" strokeWidth="2" filter="url(#b1)" />
    <path d={smooth(DOME.slice(4, 10))} stroke="#222" strokeWidth=".8" opacity=".7" />
    <path d={smooth(BRIM.slice(0, 13))} stroke="#1d1d1b" strokeWidth=".9" />

    <path
      d={MOUSTACHE_TOP_LEFT + MOUSTACHE_BOTTOM_LEFT + MOUSTACHE_BOTTOM_RIGHT + MOUSTACHE_TOP_RIGHT}
      fill="url(#tash)"
      stroke="#111"
      strokeWidth="1.100"
    />
    <path d="M627.700 378.500C628 403 648 425.400 688 425.400M877 325.200C900 325.200 916 334.500 933 349.500C938 353.500 941 357.500 945 357.300H955M1018 326.700C1036 326.700 1047 332 1061 343C1082 357.500 1101 376 1123 394.500C1150 416 1172 432.400 1211 432.400M1256 349.300C1276 349.300 1293.500 374 1293.500 407" stroke="#000" strokeWidth="1.500" />

    <path d="M1296 162h37l8 6-12 4-40-3z" fill="#9a9a9a" filter="url(#b1)" opacity=".6" />
    <path d="M1288.500 122.500h42v44l-42-1z" fill="#e7e8e9" />
    <path d="M1330.500 122.500l2.500 2-1 36-1.500 5z" fill="#d5d5d6" />
    <path d="M1296 131h27v27h-27z" fill="#dcdfe3" />
    <path d="M1288.500 122.500h42v44l-42-1z" stroke="#9a9a9a" strokeDasharray="9 4" />
    <path d="M1333 124l-1 36" stroke="#9a9a9a" strokeWidth=".8" strokeDasharray="9 4" />
    <path d="M1298 118.500v3.500" stroke="#59e259" strokeWidth="2" />
    <path d="M1333 160h6" stroke="#ff9c9c" strokeWidth="1.500" />
    <path d="M1286 168l4-2" stroke="#6a6af5" strokeWidth="2" />
    <g fontFamily="Open Sans, sans-serif" fontWeight="700">
      <text x="1294" y="149" fontSize="12" textLength="31" lengthAdjust="spacingAndGlyphs" fill="#8d9298">FRONT</text>
      <text x="1294.500" y="117" fontSize="12" textLength="6" lengthAdjust="spacingAndGlyphs" fill="#8dfa8d">Y</text>
      <text x="1340.500" y="164" fontSize="12" textLength="7" lengthAdjust="spacingAndGlyphs" fill="#ff9696">X</text>
      <text x="1280" y="172.500" fontSize="12" textLength="7" lengthAdjust="spacingAndGlyphs" fill="#8080fa">Z</text>
    </g>
  </svg>
);

/* ---------- bottom bars ---------- */

const NavBar = () => (
  <div className="ml-[256px] flex h-6 w-[245px] items-center self-start bg-[#f1f1f1] text-[#333]">
    <Art box="0 0 18 18" className="ml-0.5 h-[18px] w-[18px]">
      <path d="M9 1l2.500 3h-1.500v13h-2V4H6.500z" fill="#fff" stroke="#333" strokeWidth=".9" />
      <path d="M7 6.500C1 7 1 10 4 10.500M11 6.500c7 .5 7 4.500 0 5.500h-7" stroke="#333" strokeWidth="1.200" />
      <path d="M5.500 9.500v5L2 12z" fill="#333" />
    </Art>
    <Caret className="ml-1" />
    <Art box="0 0 17 17" className="ml-1.5 h-[17px] w-[17px]">
      <path d="M.7 6.500h15v9H.7z" fill="#d7d9df" stroke="#383d47" />
      <path d="M4 9.500h8v3H4z" fill="#fff" stroke="#383d47" strokeWidth="1.200" />
      <path d="M2 6l3-4.500v2h6.500L10 6" fill="#b8bcc4" stroke="#555b66" />
    </Art>
    <Art box="0 0 17 17" className="ml-[9px] h-[17px] w-[17px]">
      <path d="M4.500 11L1.200 7.500Q.8 5.800 2.500 6.500L5 9 3.500 3.500q.5-1.800 1.800 0L7 7.500V1.800q1-1.500 1.800 0v5.500L10.500 2.500q1.500-1 1.500.7l-.8 4.800L14 5q1.800-.3 1.200 1.200L12.500 12 11 16H6z" fill="#fff" stroke="#333" strokeWidth=".9" />
    </Art>
    <Art box="1 0 18 17" className="ml-[9px] h-[17px] w-[18px]">
      <circle cx="6" cy="6.500" r="4.200" fill="#dceef0" stroke="#6b7581" strokeWidth="1.200" />
      <path d="M9 9.500l4.500 5" stroke="#333" strokeWidth="2.500" />
      <path d="M12 3.500h4.500M14.200 1.300v4.400M12 8.500h4.500" stroke="#333" />
    </Art>
    <Art box="0 0 18 17" className="ml-[7px] h-[17px] w-[18px]">
      <path d="M1.500 1h15v15h-15z" stroke="#666" strokeDasharray="2 2" />
      <circle cx="8" cy="7" r="5.800" fill="#dceef0" stroke="#6b7581" strokeWidth="1.300" />
      <path d="M11.500 11l5 5" stroke="#333" strokeWidth="2.500" />
    </Art>
    <Caret className="ml-1" />
    <Art box="0 0 17 17" className="ml-3.5 h-[17px] w-[17px]">
      <path d="M.7 1.500h15.500v11H.7z" fill="#eee" stroke="#444b58" />
      <path d="M3 3.500h11v7H3z" fill="#9dbce8" stroke="#2b4c88" />
      <path d="M6.500 13h4l1 2.500h-6z" fill="#ddd" stroke="#444b58" />
    </Art>
    <Caret className="ml-px" />
    <Art box="0 0 17 17" className="ml-[7px] h-[17px] w-[17px]">
      <path d="M.5.500h15v15H.5zM3.500.5v15M6.500.5v15M9.500.5v15M12.500.5v15M.5 3.500h15M.5 6.500h15M.5 9.500h15M.5 12.500h15" stroke="#60646d" strokeWidth=".9" />
    </Art>
    <Caret className="ml-px" />
    <Art box="0 0 17 17" className="ml-[7px] h-[17px] w-[17px]">
      <path d="M.5 1.500h15v13H.5z" fill="#3f5f99" />
      <path d="M1.500 2.500H7v5H1.500zM9 2.500h5.500v5H9zM1.500 9H7v4.500H1.500zM9 9h5.500v4.500H9z" fill="#b7d2f2" />
      <path d="M3.500 4.500H6M10.500 4.500H13M3.500 11H6M10.500 11H13" stroke="#7f9fce" strokeWidth=".8" />
    </Art>
    <Caret className="ml-px" />
  </div>
);

const BottomPanels = () => (
  <div className="mt-auto flex h-[30px]">
    <div className="ml-1 flex h-[25px] w-[300px] items-center border border-t-0 border-[#c8c8c8] bg-[#f1f1f1] pr-px">
      <div className="mt-px ml-6 font-['Roboto',sans-serif] text-[11px] leading-[14px] tracking-[-0.5px] text-[#5c5c5c]">COMMENTS</div>
      <PanelEnd plus />
    </div>
    <div className="pt-px"><NavBar /></div>
  </div>
);

const FEATURES = "s i s e s r s e s e h s e m m m m m m c m m m m m m m".split(" ");

const FeatureIcon = ({ kind }: { kind: string }) => (
  <Art box="0 0 16 16" className="h-4 w-4">
    {kind === "s" && (
      <>
        <path d="M.7.700h14.600v14.600H.7z" fill="#dcecfa" stroke="#000" strokeWidth="1.400" />
        <path d="M3.700 3v9.300H13" stroke="#111" strokeWidth="1.500" />
        <path d="M7 8.500L14 .8l1.500 1.500-7 7.500z" fill="#ffc800" stroke="#d99a10" strokeWidth=".5" />
        <path d="M4.500 11.500l2-3.500 2 2z" fill="#222" />
      </>
    )}
    {kind === "i" && <g transform="scale(.533)"><Picture /></g>}
    {kind === "e" && (
      <>
        <path d="M.5 3.500l3-3h6v11.500l-3 3.500h-6z" fill="#dfe3ec" stroke="#3f547f" />
        <path d="M1 3.500h5.500V12H1z" fill="#9fc0e6" />
        <path d="M6.500 3.500l3-3v11l-3 3z" fill="#86a4d3" stroke="#3f547f" strokeWidth=".8" />
        <path d="M13.500 15V2M11.500 4l2-2.500 2 2.500" stroke="#444" />
      </>
    )}
    {kind === "r" && (
      <>
        <path d="M1.500 3.500q6-4 12 0M13 1v3h-3" stroke="#555" />
        <path d="M.6 7q7.400-3.500 14.800 0v4L12 14.500H4L.6 11z" fill="#a9c6eb" stroke="#3f547f" />
        <path d="M.6 7L4 9.500h8L15.400 7M4 9.500v5M12 9.500v5" stroke="#3f547f" strokeWidth=".8" />
      </>
    )}
    {kind === "h" && (
      <>
        <path d="M.7 4.500l3.500-3h11v9.500l-3.500 4h-11z" fill="#e9eaee" stroke="#3f434c" />
        <path d="M3 6.500h6.500v6.500H3z" fill="#b9cfec" stroke="#29406f" strokeWidth="1.300" />
        <path d="M6 7v3h3M11.700 5v10" stroke="#3f434c" strokeWidth=".9" />
      </>
    )}
    {kind === "c" && (
      <>
        <path d="M.6 7.500L3.500 5H6V3.500L8.500.6h6.900v7L12.500 10H10v2.500L7.500 15.400H.6z" fill="#8fb2e0" stroke="#2d4677" />
        <path d="M1.500 7.500L4 5.500h3V3.500L9 1.300h5.500L12 3.500H9" fill="#c9def5" />
      </>
    )}
    {kind === "m" && (
      <>
        <path d="M8 0l3 3.500H5zM8 16l3-3.500H5zM0 8l3.500-3v6zM16 8l-3.500-3v6z" fill="#444" />
        <path d="M8 3v2.500M8 10.500V13M3 8h2.500M10.500 8H13" stroke="#444" strokeWidth="1.700" />
        <circle cx="8" cy="8" r="1.500" stroke="#444" />
      </>
    )}
  </Art>
);

const PLAY = [
  "M11 697h1.500v15H11zM23.500 698v13L13 704.500z",
  "M45.500 698v13L35 704.500zM46.500 701.500h1.500v6h-1.500z",
  "M61 696.500v15.500L72.500 704.300z",
  "M88 698v13l10.500-6.500zM85 701.500h1.500v6H85z",
  "M111 698v13l10.500-6.500zM121.500 697h1.500v15h-1.500z",
];

const Timeline = () => (
  <div className="flex h-[49px] border-t-2 border-[#cbcbcb] bg-[#f1f1f1]">
    <div className="mt-[13px] ml-[5px] flex">
      {PLAY.map((d, i) => (
        <Art key={d} box={`${5 + i * 25} 694.500 25 20`} className="h-5 w-[25px]">
          <path d={d} fill="#484848" />
        </Art>
      ))}
    </div>
    <div className="mt-3.5 ml-3 w-[648px]">
      <div className="flex">
        {FEATURES.map((f, i) => (
          <div key={i} className="flex w-6 flex-col items-center">
            <FeatureIcon kind={f} />
            <div className="mt-[3px] h-[5px] w-0.5 bg-[#c9c9c9]" />
          </div>
        ))}
      </div>
      <div className="ml-[11px] h-0.5 w-[626px] bg-[#c9c9c9]" />
    </div>
    <Art box="782 686 16 36" className="mt-[5px] -ml-2 h-9 w-4">
      <path d="M784 689h12v4l-5 5v23h-2v-23l-5-5z" fill="#626262" />
    </Art>
    <Art box="-9 -9 18 18" className="mt-[14px] mr-2 ml-auto h-[18px] w-[18px]">
      <Gear />
    </Art>
  </div>
);

export default function App() {
  return (
    <div className="relative flex h-[731px] w-[1366px] flex-col overflow-hidden bg-white font-['Liberation_Sans',Arial,sans-serif]">
      <Defs />
      <TitleBar />
      <TabStrip />
      <QuickBar />
      <main className="relative h-[590px]">
        <Scene />
        <div className="relative flex h-full flex-col">
          <Ribbon />
          <Browser />
          <Tree />
          <BottomPanels />
        </div>
      </main>
      <Timeline />
      <div className="flex h-[3px] bg-[#0d0a09]">
        <div className="ml-[686px] w-12 bg-[#a5561f]" />
      </div>
    </div>
  );
}
